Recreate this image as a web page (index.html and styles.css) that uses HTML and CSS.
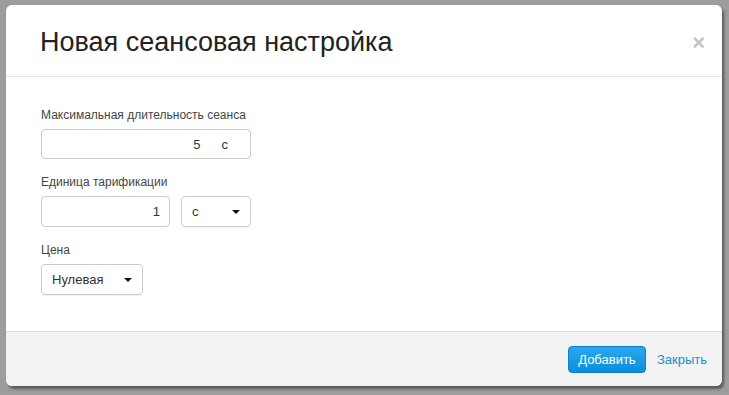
FILE: index.html
```html
<!DOCTYPE html>
<html lang="ru">

<head>
  <meta charset="UTF-8">
  <title>Новая сеансовая настройка</title>
  <link rel="stylesheet" href="styles.css">
</head>

<body>
  <!-- модальное окно -->
  <div class="modal">
    <div class="modal-header">
      <h3>Новая сеансовая настройка</h3>
      <span class="close">&times;</span>
    </div>
    <div class="modal-body">
      <div class="field">
        <label>Максимальная длительность сеанса</label>
        <div class="input input-wide">
          <span class="num">5</span>
          <span class="unit">с</span>
        </div>
      </div>
      <div class="field">
        <label>Единица тарификации</label>
        <div class="row">
          <div class="input input-mid"><span class="num">1</span></div>
          <div class="select select-unit">с <i class="caret"></i></div>
        </div>
      </div>
      <div class="field">
        <label>Цена</label>
        <div class="select select-price">Нулевая <i class="caret"></i></div>
      </div>
    </div>
    <div class="modal-footer">
      <button class="btn">Добавить</button>
      <a class="link" href="#">Закрыть</a>
    </div>
  </div>
</body>

</html>
```

FILE: styles.css
```css
* {
  margin: 0;
  padding: 0;
  box-sizing: border-box;
}

body {
  background: #9d9d9d;
  font-family: "Liberation Sans", Arial, sans-serif;
  padding: 5px 7px 10px 6px;
}

.modal {
  width: 716px;
  height: 381px;
  background: #fff;
  border-radius: 6px;
  box-shadow: 2px 3px 3px rgba(0, 0, 0, 0.45);
  overflow: hidden;
  display: flex;
  flex-direction: column;
}

.modal-header {
  height: 72px;
  border-bottom: 1px solid #e5e5e5;
  display: flex;
  align-items: center;
  justify-content: space-between;
  padding: 0 17px 0 34px;
}

.modal-header h3 {
  font-weight: normal;
  font-size: 27px;
  color: #222;
  margin-top: 3px;
}

.close {
  font-size: 22px;
  font-weight: bold;
  color: #c4c4c4;
  margin-top: 4px;
}

.modal-body {
  flex: 1;
  padding: 31px 35px 0;
}

.field {
  margin-bottom: 16px;
}

.field label {
  display: block;
  font-size: 12px;
  color: #444;
  margin-bottom: 7px;
}

.row {
  display: flex;
  gap: 11px;
}

.input,
.select {
  height: 31px;
  border: 1px solid #ccc;
  border-radius: 4px;
  display: flex;
  align-items: center;
  font-size: 13px;
  color: #333;
}

.input {
  justify-content: flex-end;
  padding-right: 12px;
}

.input-wide {
  width: 210px;
  height: 30px;
  padding-right: 22px;
}

.input-wide .num {
  margin-right: 21px;
}

.input-mid {
  width: 129px;
  padding-right: 9px;
}

.select {
  justify-content: space-between;
  padding: 0 10px;
  box-shadow: 0 1px 1px rgba(0, 0, 0, 0.06);
}

.select-unit {
  width: 70px;
}

.select-price {
  width: 102px;
}

.caret {
  width: 0;
  height: 0;
  border-left: 4px solid transparent;
  border-right: 4px solid transparent;
  border-top: 4px solid #111;
}

.modal-footer {
  height: 55px;
  background: #f2f2f2;
  border-top: 1px solid #ddd;
  display: flex;
  align-items: center;
  justify-content: flex-end;
  padding: 0 15px 0 0;
}

.btn {
  width: 78px;
  height: 27px;
  border: 1px solid #0b7fd0;
  border-radius: 4px;
  background: linear-gradient(#2aa8ee, #0a8ee0);
  color: #fff;
  font-family: "Liberation Sans", Arial, sans-serif;
  font-size: 13px;
  margin-right: 11px;
}

.link {
  font-size: 13px;
  color: #1a8fd6;
  text-decoration: none;
}
```
